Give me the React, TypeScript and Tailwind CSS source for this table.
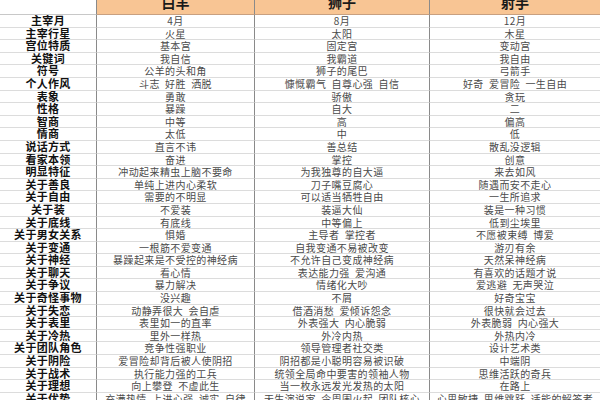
import React from "react";

const rows: [string, string, string, string][] = [
  ["主宰月", "4月", "8月", "12月"],
  ["主宰行星", "火星", "太阳", "木星"],
  ["宫位特质", "基本宫", "固定宫", "变动宫"],
  ["关键词", "我自信", "我霸道", "我自由"],
  ["符号", "公羊的头和角", "狮子的尾巴", "弓箭手"],
  ["个人作风", "斗志  好胜  洒脱", "慷慨霸气  自尊心强  自信", "好奇  爱冒险  一生自由"],
  ["表象", "勇敢", "骄傲", "贪玩"],
  ["性格", "暴躁", "自大", "二"],
  ["智商", "中等", "高", "偏高"],
  ["情商", "太低", "中", "低"],
  ["说话方式", "直言不讳", "善总结", "散乱没逻辑"],
  ["看家本领", "奋进", "掌控", "创意"],
  ["明显特征", "冲动起来精虫上脑不要命", "为我独尊的自大逼", "来去如风"],
  ["关于善良", "单纯上进内心柔软", "刀子嘴豆腐心", "随遇而安不走心"],
  ["关于自由", "需要的不明显", "可以适当牺牲自由", "一生所追求"],
  ["关于装", "不爱装", "装逼大仙", "装是一种习惯"],
  ["关于底线", "有底线", "中等偏上", "低到尘埃里"],
  ["关于男女关系", "惧婚", "主导者  掌控者", "不愿被束缚  博爱"],
  ["关于变通", "一根筋不爱变通", "自我变通不易被改变", "游刃有余"],
  ["关于神经", "暴躁起来是不受控的神经病", "不允许自己变成神经病", "天然呆神经病"],
  ["关于聊天", "看心情", "表达能力强  爱沟通", "有喜欢的话题才说"],
  ["关于争议", "暴力解决", "情绪化大吵", "爱逃避  无声哭泣"],
  ["关于奇怪事物", "没兴趣", "不屑", "好奇宝宝"],
  ["关于失恋", "动静弄很大  会自虐", "借酒消愁  爱倾诉怨念", "很快就会过去"],
  ["关于表里", "表里如一的直率", "外表强大  内心脆弱", "外表脆弱  内心强大"],
  ["关于冷热", "里外一样热", "外冷内热", "外热内冷"],
  ["关于团队角色", "竞争性强职业", "领导管理者社交类", "设计艺术类"],
  ["关于阴险", "爱冒险却背后被人使阴招", "阴招都是小聪明容易被识破", "中端阴"],
  ["关于战术", "执行能力强的工兵", "统领全局命中要害的领袖人物", "思维活跃的奇兵"],
  ["关于理想", "向上攀登  不虚此生", "当一枚永远发光发热的太阳", "在路上"],
  ["关于优势", "充满热情  上进心强  诚实  自律", "天生演说家  令周围火起  团队核心", "心思敏捷  思维跳跃  适能的解答者"],
];

const font = { fontFamily: '"Noto Sans CJK SC", "Noto Sans", sans-serif' };

export default function App() {
  return (
    <div className="w-[600px] h-[400px] overflow-hidden bg-white" style={font}>
      <div className="grid grid-cols-[97px_158px_175px_170px]">
        <div className="h-[15px] border-b border-[#c8c8c8] border-r border-r-[#8a8a8a] bg-white" />
        <div className="h-[15px] overflow-hidden border-b border-[#c8a080] border-r border-r-[#8a8a8a] bg-[#f8c594] text-center">
          <div className="mt-[-8px] text-[14px] leading-[20px] font-bold text-[#1a1a1a]">白羊</div>
        </div>
        <div className="h-[15px] overflow-hidden border-b border-[#c8a080] border-r border-r-[#8a8a8a] bg-[#f8c594] text-center">
          <div className="mt-[-8px] text-[14px] leading-[20px] font-bold text-[#1a1a1a]">狮子</div>
        </div>
        <div className="h-[15px] overflow-hidden border-b border-[#c8a080] bg-[#f8c594] text-center">
          <div className="mt-[-8px] text-[14px] leading-[20px] font-bold text-[#1a1a1a]">射手</div>
        </div>
        {rows.map((r, i) => (
          <React.Fragment key={i}>
            <div className="h-[12.6px] overflow-hidden border-b border-[#dcdcdc] border-r border-r-[#8a8a8a] text-center text-[11px] leading-[11.6px] font-bold text-[#111] tracking-[0.3px] whitespace-nowrap">
              {r[0]}
            </div>
            <div className="h-[12.6px] overflow-hidden border-b border-[#dcdcdc] border-r border-r-[#8a8a8a] text-center text-[10px] leading-[11.6px] text-[#4a4a4a] tracking-[0.4px] whitespace-pre">
              {r[1]}
            </div>
            <div className="h-[12.6px] overflow-hidden border-b border-[#dcdcdc] border-r border-r-[#8a8a8a] text-center text-[10px] leading-[11.6px] text-[#4a4a4a] tracking-[0.4px] whitespace-pre">
              {r[2]}
            </div>
            <div className="h-[12.6px] overflow-hidden border-b border-[#dcdcdc] text-center text-[10px] leading-[11.6px] text-[#4a4a4a] tracking-[0.4px] whitespace-pre">
              {r[3]}
            </div>
          </React.Fragment>
        ))}
      </div>
    </div>
  );
}
